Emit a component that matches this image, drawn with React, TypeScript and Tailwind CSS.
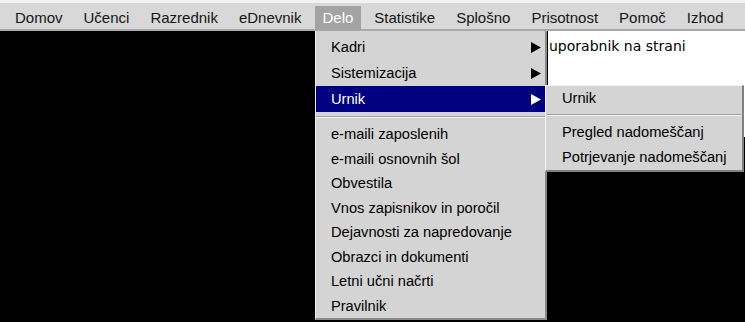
import React from 'react';

const topItems = ['Domov', 'Učenci', 'Razrednik', 'eDnevnik', 'Delo', 'Statistike', 'Splošno', 'Prisotnost', 'Pomoč', 'Izhod'];

const lowerItems = [
  'e-maili zaposlenih',
  'e-maili osnovnih šol',
  'Obvestila',
  'Vnos zapisnikov in poročil',
  'Dejavnosti za napredovanje',
  'Obrazci in dokumenti',
  'Letni učni načrti',
  'Pravilnik',
];

const Arrow = ({ white }: { white?: boolean }) => (
  <svg width="10" height="11" viewBox="0 0 10 11" className="shrink-0">
    <polygon points="0,0 10,5.5 0,11" fill={white ? '#ffffff' : '#000000'} />
  </svg>
);

const Separator = ({ className }: { className: string }) => (
  <div className={`flex items-center ${className}`}>
    <div className="w-full border-t border-t-[#a0a0a0] border-b border-b-[#f4f4f4]" />
  </div>
);

const SubMenu = () => (
  <div className="absolute left-full top-[-1px] w-[199px] bg-[#d4d4d4] border-t border-l border-[#f4f4f4] border-r-2 border-b-2 border-r-[#808080] border-b-[#808080] text-[14.67px] text-black">
    <div className="h-[24px] leading-[24px] pl-[16px]">Urnik</div>
    <Separator className="h-[10px] px-[1px]" />
    <div className="h-[25px] leading-[25px] pl-[16px]">Pregled nadomeščanj</div>
    <div className="h-[25px] leading-[25px] pl-[16px]">Potrjevanje nadomeščanj</div>
  </div>
);

const DeloMenu = () => (
  <div className="absolute left-0 top-[25px] w-[232px] bg-[#d4d4d4] border-l border-l-[#ececec] border-r-2 border-b-2 border-r-[#8a8a8a] border-b-[#8a8a8a] pt-[3px] text-[14.67px] text-black z-10">
    <div className="h-[26px] flex items-center justify-between pl-[15px] pr-[4px]">
      <span>Kadri</span>
      <Arrow />
    </div>
    <div className="h-[26px] flex items-center justify-between pl-[15px] pr-[4px]">
      <span>Sistemizacija</span>
      <Arrow />
    </div>
    <div className="relative h-[26px] flex items-center justify-between pl-[15px] pr-[4px] bg-[#000080] text-white">
      <span>Urnik</span>
      <Arrow white />
      <SubMenu />
    </div>
    <Separator className="h-[10px]" />
    {lowerItems.map((item) => (
      <div key={item} className="h-[24.5px] leading-[24.5px] pl-[15px]">
        {item}
      </div>
    ))}
  </div>
);

export default function App() {
  return (
    <div className="w-[745px] h-[322px] overflow-hidden bg-black font-['Liberation_Sans',Arial,sans-serif]">
      <div className="h-[31px] flex items-start pl-[4.5px] bg-[#d8d8d8] border-t-[3px] border-t-[#f2f2f2] border-b-2 border-b-[#a9a9a9]">
        {topItems.map((item) => (
          <div
            key={item}
            className={`relative mt-[3px] mx-[3px] px-[7.5px] h-[24px] leading-[24px] text-[15px] ${
              item === 'Delo' ? 'bg-[#a3a3a3] text-white' : 'text-[#161616]'
            }`}
          >
            {item}
            {item === 'Delo' && <DeloMenu />}
          </div>
        ))}
      </div>
      <div className="flex pl-[548px]">
        <div className="w-full h-[106px] bg-white pl-[1px] pt-[5px] text-[14px] leading-[20px] text-black font-['DejaVu_Sans',sans-serif]">
          uporabnik na strani
        </div>
      </div>
    </div>
  );
}
